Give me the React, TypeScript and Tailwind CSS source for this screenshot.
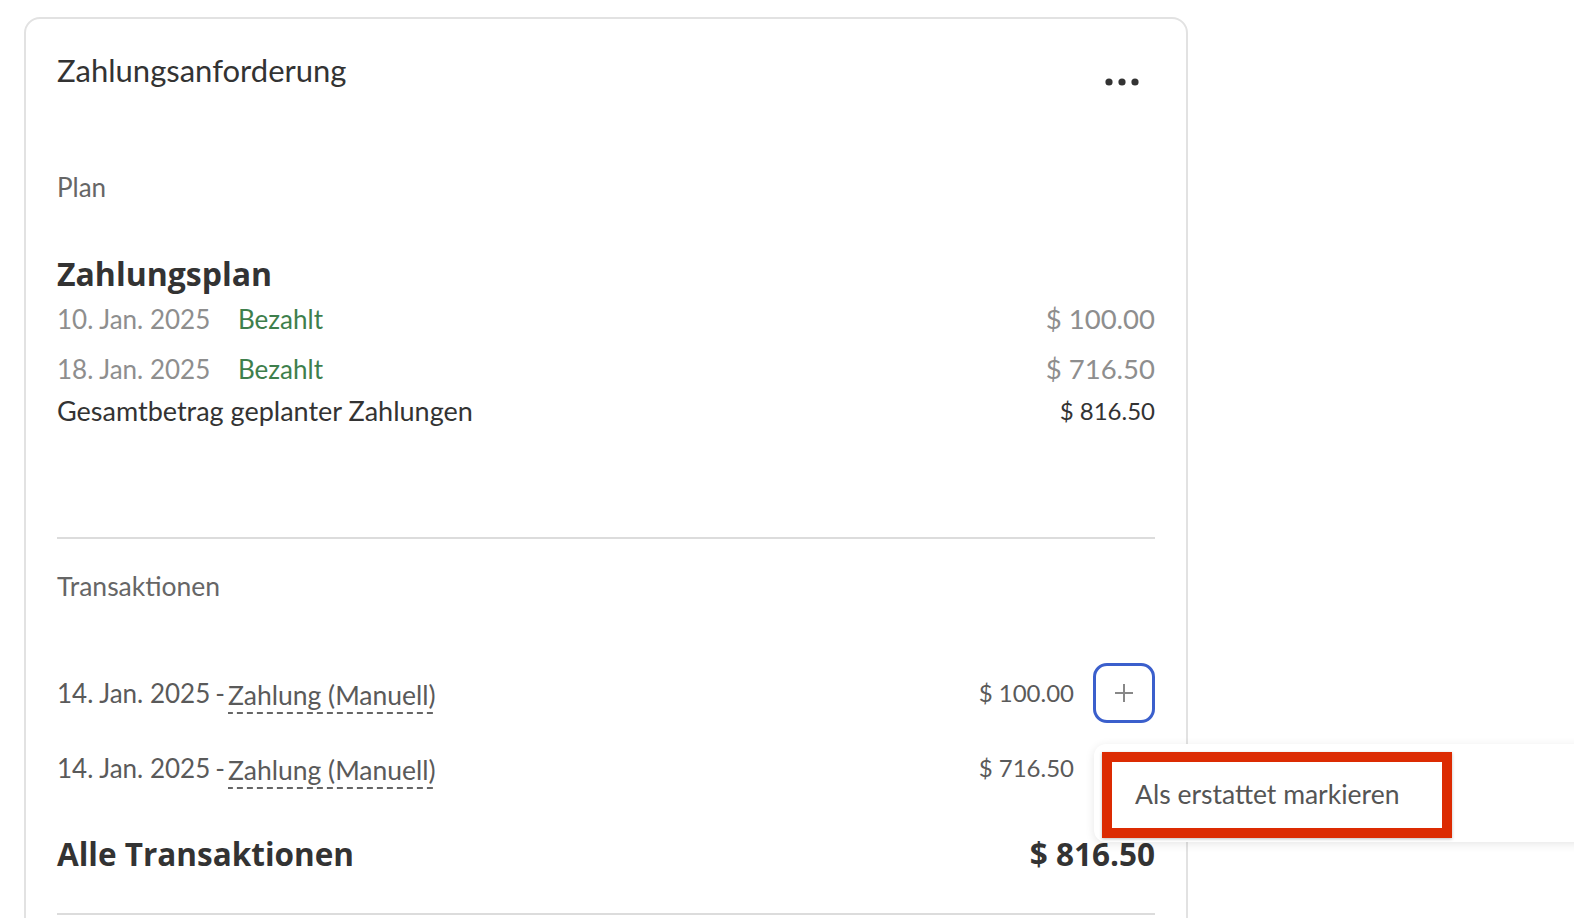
import React from "react";

const font = { fontFamily: '"Lato", "Noto Sans", sans-serif' };
const boldFont = { fontFamily: '"Open Sans", "Noto Sans", sans-serif' };

function Dots() {
  return (
    <svg width="36" height="8" viewBox="0 0 36 8" className="mt-[28px] mr-[14px]">
      <circle cx="4" cy="4" r="3.6" fill="#333" />
      <circle cx="17" cy="4" r="3.6" fill="#333" />
      <circle cx="30" cy="4" r="3.6" fill="#333" />
    </svg>
  );
}

function TxRow({ amount, button }: { amount: string; button?: boolean }) {
  return (
    <div className="flex items-center h-[60px]">
      <div className="flex items-center text-[#5a5a5a]">
        <span className="text-[26px]">14. Jan. 2025</span>
        <span className="text-[26px] ml-[5px]">-</span>
        <span className="ml-[3px] text-[26.5px] pb-[3px] bg-[linear-gradient(to_right,#666_60%,transparent_0)] bg-[length:10px_2px] bg-repeat-x bg-bottom leading-[32px] mt-[6px]">
          Zahlung (Manuell)
        </span>
      </div>
      <div className="flex-1" />
      <span className="text-[24px] text-[#5a5a5a]">{amount}</span>
      {button ? (
        <div className="ml-[19px] w-[62px] h-[60px] rounded-[14px] border-[3px] border-[#3b5fcc] flex items-center justify-center">
          <svg width="20" height="20" viewBox="0 0 20 20">
            <line x1="10" y1="1" x2="10" y2="19" stroke="#888" strokeWidth="2" />
            <line x1="1" y1="10" x2="19" y2="10" stroke="#888" strokeWidth="2" />
          </svg>
        </div>
      ) : (
        <div className="ml-[19px] w-[62px]" />
      )}
    </div>
  );
}

export default function App() {
  return (
    <div className="relative w-[1574px] h-[918px] overflow-hidden bg-white" style={font}>
      <div className="absolute left-[24px] top-[17px] w-[1164px] h-[960px] border-2 border-[#e2e2e2] rounded-[16px] px-[31px] pt-[31px]">
        <div className="flex justify-between items-start">
          <div className="text-[31px] leading-[40px] text-[#333]">Zahlungsanforderung</div>
          <Dots />
        </div>
        <div className="mt-[82px] text-[26px] leading-[30px] text-[#666]">Plan</div>
        <div className="mt-[52px] text-[32px] leading-[40px] font-bold text-[#333]" style={boldFont}>
          Zahlungsplan
        </div>
        <div className="mt-[5px] flex items-center h-[40px] text-[26px]">
          <span className="w-[181px] text-[#8e8e8e]">10. Jan. 2025</span>
          <span className="text-[#3e7f4c]">Bezahlt</span>
          <span className="flex-1" />
          <span className="text-[27.5px] text-[#8e8e8e]">$ 100.00</span>
        </div>
        <div className="mt-[10px] flex items-center h-[40px] text-[26px]">
          <span className="w-[181px] text-[#8e8e8e]">18. Jan. 2025</span>
          <span className="text-[#3e7f4c]">Bezahlt</span>
          <span className="flex-1" />
          <span className="text-[27.5px] text-[#8e8e8e]">$ 716.50</span>
        </div>
        <div className="mt-[4px] flex items-center h-[36px] text-[27px] text-[#333]">
          <span>Gesamtbetrag geplanter Zahlungen</span>
          <span className="flex-1" />
          <span className="text-[24px]">$ 816.50</span>
        </div>
        <div className="mt-[108px] h-[2px] bg-[#dcdcdc]" />
        <div className="mt-[32px] text-[26.5px] leading-[30px] text-[#666]">Transaktionen</div>
        <div className="mt-[62px]">
          <TxRow amount="$ 100.00" button />
        </div>
        <div className="mt-[15px]">
          <TxRow amount="$ 716.50" />
        </div>
        <div className="mt-[36px] flex items-center h-[40px] text-[31.5px] font-bold text-[#333]" style={boldFont}>
          <span>Alle Transaktionen</span>
          <span className="flex-1" />
          <span>$ 816.50</span>
        </div>
        <div className="mt-[39px] h-[2px] bg-[#dcdcdc]" />
      </div>

      <div className="absolute left-[1094px] top-[744px] w-[520px] h-[98px] bg-white rounded-[12px] shadow-[0_2px_10px_rgba(0,0,0,0.10)] py-[8px] pl-[8px]">
        <div className="w-[350px] h-[86px] border-[10px] border-[#dc2b02] shadow-[0_1px_3px_rgba(0,0,0,0.25)] flex items-center pl-[23px]">
          <span className="text-[26.5px] text-[#555]">Als erstattet markieren</span>
        </div>
      </div>
    </div>
  );
}
